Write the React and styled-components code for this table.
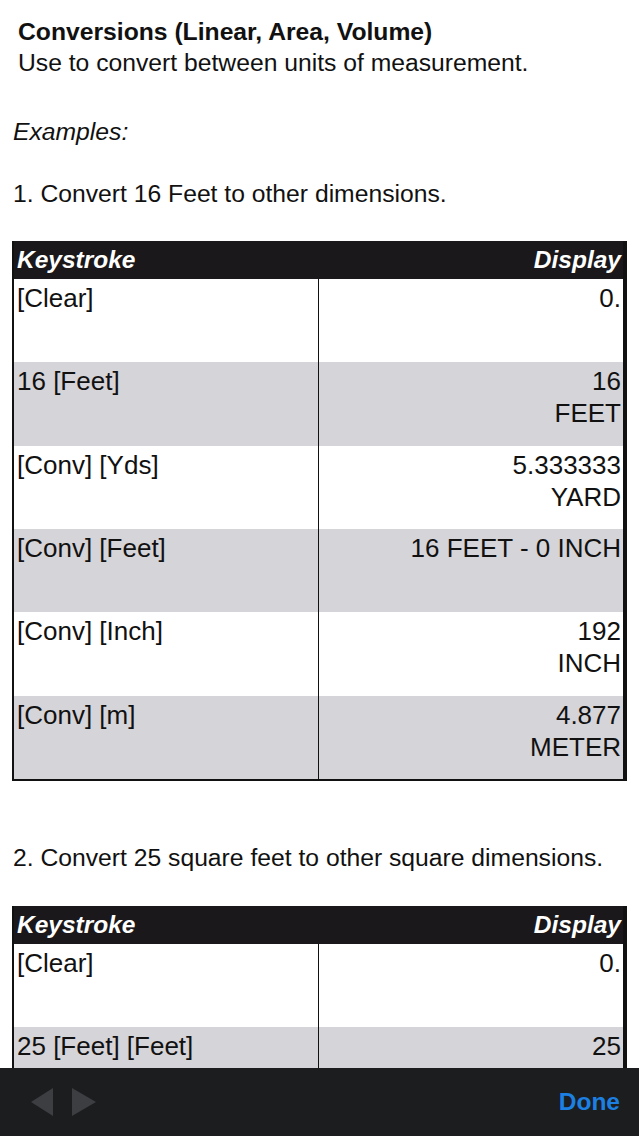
import styled, { createGlobalStyle } from 'styled-components'

const GlobalStyle = createGlobalStyle`
  html, body {
    margin: 0;
    padding: 0;
    background: #ffffff;
  }
  body {
    font-family: 'Liberation Sans', Arial, sans-serif;
    color: #111111;
  }
`

const Page = styled.div`
  padding: 16px 0 120px;
  font-size: 24.7px;
  line-height: 31px;
`

const Title = styled.h1`
  margin: 0;
  padding-left: 18px;
  font-size: 24.7px;
  line-height: 31px;
  font-weight: bold;
`

const Lead = styled.p`
  margin: 0;
  padding-left: 18px;
`

const Examples = styled.p`
  margin: 38px 0 0;
  padding-left: 13px;
  font-style: italic;
`

const Step = styled.p`
  margin: ${(props) => props.gap}px 0 0;
  padding-left: 13px;
`

const Table = styled.div`
  margin: ${(props) => props.gap}px 0 0 12px;
  width: 615px;
  box-sizing: border-box;
  border-left: 2px solid #111;
  border-right: 4px solid #111;
  border-bottom: 2px solid #111;
  display: grid;
  grid-template-columns: 305px 1fr;
`

const HeadCell = styled.div`
  height: 38px;
  background: #1a181a;
  color: #ffffff;
  font-size: 24.5px;
  font-weight: bold;
  font-style: italic;
  line-height: 38px;
  padding: 0 2px 0 3px;
  text-align: ${(props) => props.align};
`

const Cell = styled.div`
  box-sizing: border-box;
  height: 83.33px;
  padding: 3px 2px 0 3px;
  font-size: 26px;
  line-height: 32px;
  background: ${(props) => (props.shade ? '#d5d4d8' : '#ffffff')};
  text-align: ${(props) => props.align};
  border-right: ${(props) => (props.divider ? '1.5px solid #111' : 'none')};
`

const Toolbar = styled.div`
  position: fixed;
  left: 0;
  right: 0;
  bottom: 0;
  height: 68px;
  background: #1b1d1f;
  display: flex;
  align-items: center;
  justify-content: space-between;
  padding: 0 19px 0 31px;
  box-sizing: border-box;
`

const Arrows = styled.div`
  display: flex;
  gap: 19px;
  align-items: center;
`

const Done = styled.span`
  color: #1c80e2;
  font-family: 'Liberation Sans', Arial, sans-serif;
  font-size: 24.5px;
  font-weight: bold;
  line-height: 1;
`

const ArrowLeft = () => (
  <svg width="22" height="28" viewBox="0 0 22 28">
    <path d="M0 14 L22 0 L22 28 Z" fill="#3c3e41" />
  </svg>
)

const ArrowRight = () => (
  <svg width="24" height="28" viewBox="0 0 24 28">
    <path d="M0 0 L24 14 L0 28 Z" fill="#3c3e41" />
  </svg>
)

const linear = [
  ['[Clear]', ['0.']],
  ['16 [Feet]', ['16', 'FEET']],
  ['[Conv] [Yds]', ['5.333333', 'YARD']],
  ['[Conv] [Feet]', ['16 FEET - 0 INCH']],
  ['[Conv] [Inch]', ['192', 'INCH']],
  ['[Conv] [m]', ['4.877', 'METER']],
]

const area = [
  ['[Clear]', ['0.']],
  ['25 [Feet] [Feet]', ['25', 'SQUARE FEET']],
]

const ConversionTable = ({ rows, gap }) => (
  <Table gap={gap}>
    <HeadCell align="left">Keystroke</HeadCell>
    <HeadCell align="right">Display</HeadCell>
    {rows.map(([keys, display], i) => [
      <Cell key={`k${i}`} align="left" shade={i % 2 === 1} divider>
        {keys}
      </Cell>,
      <Cell key={`d${i}`} align="right" shade={i % 2 === 1}>
        {display.map((line) => (
          <div key={line}>{line}</div>
        ))}
      </Cell>,
    ])}
  </Table>
)

const App = () => (
  <>
    <GlobalStyle />
    <Page>
      <Title>Conversions (Linear, Area, Volume)</Title>
      <Lead>Use to convert between units of measurement.</Lead>
      <Examples>Examples:</Examples>
      <Step gap={31}>1. Convert 16 Feet to other dimensions.</Step>
      <ConversionTable rows={linear} gap={32} />
      <Step gap={61}>2. Convert 25 square feet to other square dimensions.</Step>
      <ConversionTable rows={area} gap={33} />
    </Page>
    <Toolbar>
      <Arrows>
        <ArrowLeft />
        <ArrowRight />
      </Arrows>
      <Done>Done</Done>
    </Toolbar>
  </>
)

export default App
